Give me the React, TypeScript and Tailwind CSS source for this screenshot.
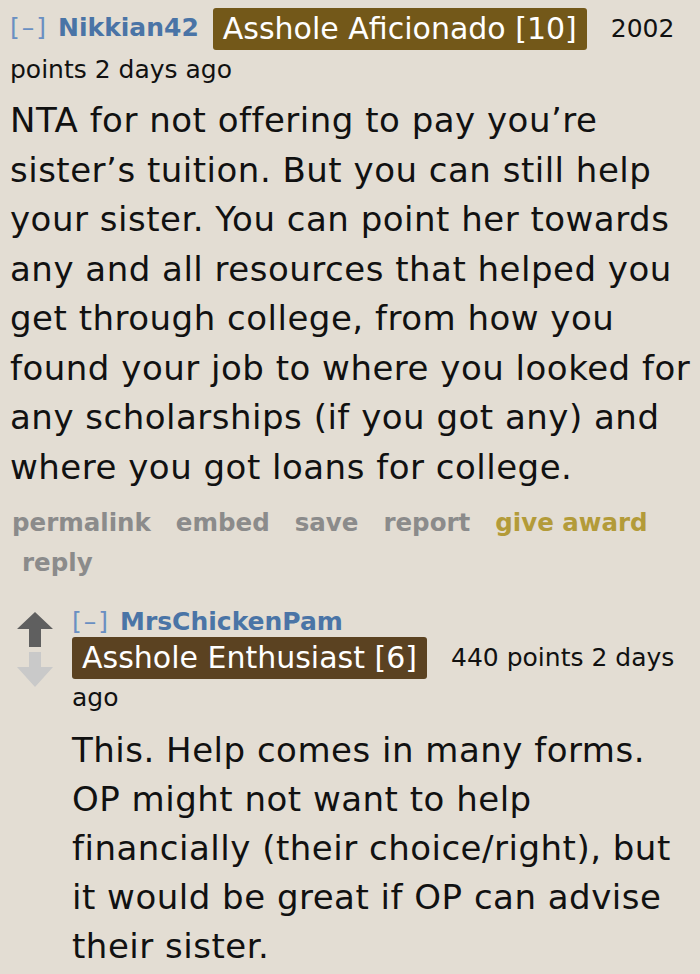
const font = { fontFamily: '"DejaVu Sans", Verdana, sans-serif' };

function Badge({ text, dark }: { text: string; dark?: boolean }) {
  return (
    <span
      className={
        "inline-flex items-center h-[42px] px-[10px] rounded-[3px] text-white text-[30px] leading-none " +
        (dark ? "bg-[#5b4221]" : "bg-[#735819]")
      }
    >
      {text}
    </span>
  );
}

function VoteArrows() {
  return (
    <svg width="36" height="76" viewBox="0 0 36 76">
      <path d="M18 0 L36 17 L24 17 L24 35 L12 35 L12 17 L0 17 Z" fill="#5f5f5f" />
      <path d="M12 40 L24 40 L24 55 L36 55 L18 75 L0 55 L12 55 Z" fill="#c9c9c9" />
    </svg>
  );
}

function Actions() {
  return (
    <div className="mt-[11px] pl-[2px] text-[24.5px] font-bold text-[#8b8b8b] leading-[40px]">
      <div className="flex gap-[25px]">
        <span>permalink</span>
        <span>embed</span>
        <span>save</span>
        <span>report</span>
        <span className="text-[#b39b39]">give award</span>
      </div>
      <div className="pl-[10px]">reply</div>
    </div>
  );
}

export default function App() {
  return (
    <div className="w-[700px] h-[974px] overflow-hidden bg-[#e3ddd3] text-[#111]" style={font}>
      <div className="pl-[10px] pt-[8px]">
        <div className="flex items-start">
          <div className="flex items-center h-[40px] text-[25px]">
            <span className="text-[#6a8fc2] tracking-[2px]">[–]</span>
            <span className="ml-[10px] font-bold text-[#4a74a6]">Nikkian42</span>
          </div>
          <span className="ml-[14px]">
            <Badge text="Asshole Aficionado [10]" />
          </span>
          <span className="ml-[24px] mt-[8px] text-[25px] leading-none">2002</span>
        </div>
        <div className="text-[25px] leading-none mt-[7px]">points 2 days ago</div>
        <p className="mt-[14px] text-[34px] leading-[49.5px] tracking-[0.5px]">
          NTA for not offering to pay you’re sister’s tuition. But you can still help your sister. You can point her towards any and all resources that helped you get through college, from how you found your job to where you looked for any scholarships (if you got any) and where you got loans for college.
        </p>
        <Actions />
      </div>

      <div className="flex mt-[18px] pl-[17px]">
        <div className="pt-[11px]">
          <VoteArrows />
        </div>
        <div className="ml-[19px] flex-1">
          <div className="text-[25px] leading-[30px] mt-[6px]">
            <span className="text-[#6a8fc2] tracking-[2px]">[–]</span>
            <span className="ml-[10px] font-bold text-[#4a74a6]">MrsChickenPam</span>
          </div>
          <div className="flex items-center">
            <Badge text="Asshole Enthusiast [6]" dark />
            <span className="ml-[24px] text-[25px]">440 points 2 days</span>
          </div>
          <div className="text-[25px] leading-none mt-[6px]">ago</div>
          <p className="mt-[16px] text-[34px] leading-[49px] tracking-[0.5px] pr-[10px]">
            This. Help comes in many forms. OP might not want to help financially (their choice/right), but it would be great if OP can advise their sister.
          </p>
        </div>
      </div>
    </div>
  );
}
